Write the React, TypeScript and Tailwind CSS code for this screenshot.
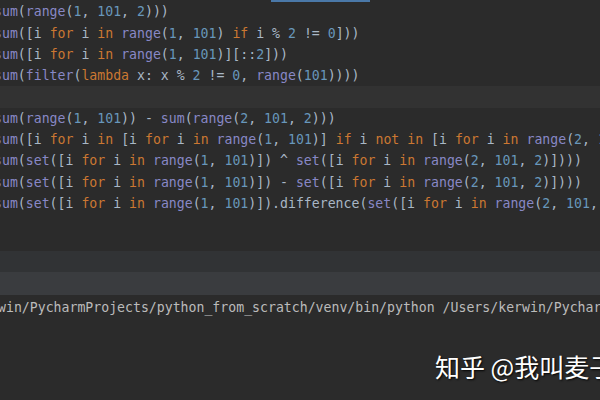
const KEYWORDS = new Set(["for", "in", "if", "not", "lambda"]);
const BUILTINS = new Set(["sum", "range", "set", "filter"]);

const code = [
  "sum(range(1, 101, 2)))",
  "sum([i for i in range(1, 101) if i % 2 != 0]))",
  "sum([i for i in range(1, 101)][::2]))",
  "sum(filter(lambda x: x % 2 != 0, range(101))))",
  "",
  "sum(range(1, 101)) - sum(range(2, 101, 2)))",
  "sum([i for i in [i for i in range(1, 101)] if i not in [i for i in range(2, 101, 2)]]))",
  "sum(set([i for i in range(1, 101)]) ^ set([i for i in range(2, 101, 2)])))",
  "sum(set([i for i in range(1, 101)]) - set([i for i in range(2, 101, 2)])))",
  "sum(set([i for i in range(1, 101)]).difference(set([i for i in range(2, 101, 2)]))))",
];

const tokenColor = (tok: string) => {
  if (KEYWORDS.has(tok)) return "text-[#cc7832]";
  if (BUILTINS.has(tok)) return "text-[#8888c6]";
  if (/^\d+$/.test(tok)) return "text-[#6897bb]";
  return "text-[#a9b7c6]";
};

const CodeLine = ({ text, current }: { text: string; current?: boolean }) => {
  const tokens = text.split(/(\w+)/).filter((t) => t !== "");
  return (
    <div className={`h-[21.3px] whitespace-pre ${current ? "bg-[#323232]" : ""}`}>
      <span className="-ml-[6px] inline-block">
        {tokens.map((tok, i) => (
          <span key={i} className={tokenColor(tok)}>
            {tok}
          </span>
        ))}
      </span>
    </div>
  );
};

export default function App() {
  return (
    <div className="relative w-[600px] h-[400px] overflow-hidden bg-[#2b2b2b] font-['DejaVu_Sans_Mono',monospace] text-[13.2px] leading-[21.3px]">
      <div className="h-[1.3px]">
        <div className="ml-[271px] w-[99px] h-[1.5px] bg-[#4a78a8]" />
      </div>

      <div className="flex flex-col">
        {code.map((line, i) => (
          <CodeLine key={i} text={line} current={i === 4} />
        ))}
      </div>

      <div className="h-[37px]" />
      <div className="h-[21px] bg-[#313335]" />
      <div className="h-[23px] bg-[#3a3c3f]" />

      <div className="pt-[2px] whitespace-pre text-[#bbbbbb]">
        <span className="-ml-[2px] inline-block">
          win/PycharmProjects/python_from_scratch/venv/bin/python /Users/kerwin/PycharmProjects
        </span>
      </div>

      <div className="absolute left-[435px] top-[350px] whitespace-nowrap text-[25px] leading-[32px] text-white font-['Noto_Sans_CJK_SC',sans-serif] [text-shadow:1px_1px_2px_rgba(0,0,0,0.9)]">
        知乎 @我叫麦子
      </div>
    </div>
  );
}
